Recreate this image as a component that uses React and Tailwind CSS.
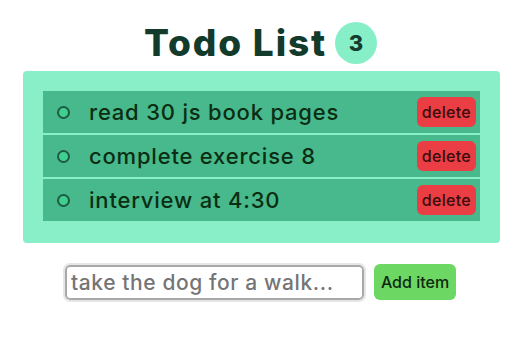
import { useState } from 'react'

const initialTodos = [
  { id: 1, text: 'read 30 js book pages' },
  { id: 2, text: 'complete exercise 8' },
  { id: 3, text: 'interview at 4:30' },
]

export default function App() {
  const [todos, setTodos] = useState(initialTodos)
  const [draft, setDraft] = useState('')

  const addItem = () => {
    if (!draft.trim()) return
    setTodos([...todos, { id: Date.now(), text: draft.trim() }])
    setDraft('')
  }

  return (
    <div className="min-h-[352px] w-[521px] bg-white font-['Inter','Noto_Sans',sans-serif]">
      <div className="flex items-center justify-center gap-[8px] pt-[18px]">
        <h1 className="text-[37px] font-extrabold leading-[50px] tracking-[0.05em] text-[#123b2c]">Todo List</h1>
        <span className="flex h-[42px] w-[42px] items-center justify-center rounded-full bg-[#86efc8] text-[22px] font-extrabold text-[#163a2c]">
          {todos.length}
        </span>
      </div>

      <div className="ml-[23px] mr-[21px] mt-[3px] rounded-[4px] bg-[#88efc8] px-5 pt-5 pb-[22px]">
        <ul className="flex flex-col gap-[2px]">
          {todos.map((todo) => (
            <li key={todo.id} className="flex h-[42px] items-center bg-[#48b98c] pl-[14px] pr-[4px]">
              <span className="h-[13px] w-[13px] rounded-full border-2 border-[#1f5a44] bg-[#3fcf8e]" />
              <span className="ml-[19px] flex-1 text-[22px] font-medium tracking-[0.8px] text-[#0b2e12]">{todo.text}</span>
              <button
                onClick={() => setTodos(todos.filter((t) => t.id !== todo.id))}
                className="h-[30px] rounded-[6px] bg-[#ea3e44] px-[5px] text-[16px] font-medium tracking-[0.3px] text-[#3a0b0b]"
              >
                delete
              </button>
            </li>
          ))}
        </ul>
      </div>

      <div className="mt-[21px] flex items-center justify-center gap-[10px]">
        <input
          value={draft}
          onChange={(e) => setDraft(e.target.value)}
          placeholder="take the dog for a walk..."
          className="h-[35px] w-[299px] rounded-[5px] border-2 border-[#a8a8a8] px-[4px] text-[21px] font-medium tracking-[0.6px] text-[#333] outline outline-2 outline-[#e6e6e6] placeholder:text-[#757575]"
        />
        <button onClick={addItem} className="h-[36px] rounded-[6px] bg-[#6dd764] px-[7px] text-[16px] font-medium text-[#0e2a0e]">
          Add item
        </button>
      </div>
    </div>
  )
}
